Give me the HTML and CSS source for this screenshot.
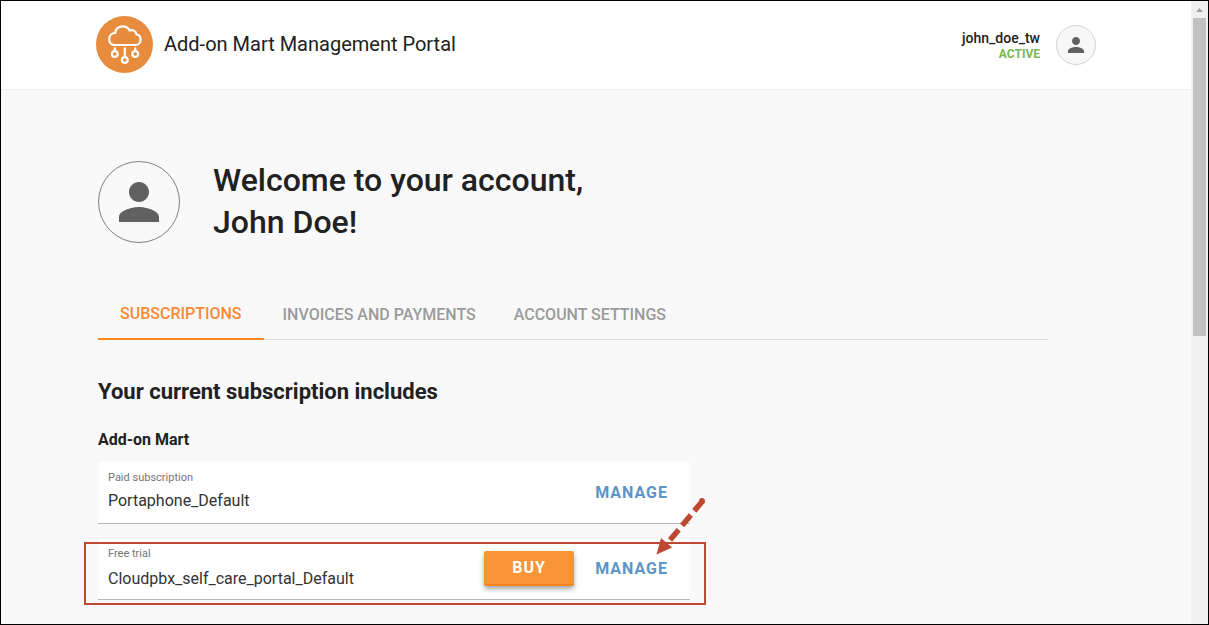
FILE: index.html
```html
<!DOCTYPE html>
<html lang="en">
<head>
<meta charset="utf-8">
<title>Add-on Mart Management Portal</title>
<link rel="stylesheet" href="styles.css">
</head>
<body>
<div class="window">
  <div class="page">
    <header class="header">
      <svg class="logo" viewBox="0 0 57 57" aria-hidden="true">
        <circle cx="28.5" cy="28.5" r="28.5" fill="#e78b3c"/>
        <g fill="none" stroke="#fff" stroke-width="2.2" stroke-linecap="round" stroke-linejoin="round">
          <path d="M18.5 29 C15.300 29 13.200 26.200 13.200 23 C13.200 19.500 15.500 17 19.300 17 C19.300 13 22.500 10.300 26.500 10.300 C30 10.300 32.500 12 33.700 14.600 C37 13.300 40.200 15.300 40.500 18.500 C43.500 18.700 44.600 21.200 44.600 23.700 C44.600 26.800 42.500 29 39.500 29 Z"/>
          <path d="M18.800 32.300v2.500M28.800 32.300v8M39.200 32.300v2.500"/>
          <circle cx="18.800" cy="38" r="2.900"/>
          <circle cx="28.800" cy="44" r="2.900"/>
          <circle cx="39.200" cy="38" r="2.900"/>
        </g>
      </svg>
      <span class="brand">Add-on Mart Management Portal</span>
      <div class="user">
        <span class="user-name">john_doe_tw</span>
        <span class="user-status">ACTIVE</span>
      </div>
      <button class="user-button" type="button" aria-label="Account menu">
        <svg class="person" viewBox="4 4 16 16" aria-hidden="true"><path d="M12 12c2.210 0 4-1.790 4-4s-1.790-4-4-4-4 1.790-4 4 1.790 4 4 4zm0 2c-2.670 0-8 1.340-8 4v2h16v-2c0-2.660-5.330-4-8-4z"/></svg>
      </button>
    </header>
    <main class="content">
      <section class="welcome">
        <div class="avatar">
          <svg class="person" viewBox="4 4 16 16" aria-hidden="true"><path d="M12 12c2.210 0 4-1.790 4-4s-1.790-4-4-4-4 1.790-4 4 1.790 4 4 4zm0 2c-2.670 0-8 1.340-8 4v2h16v-2c0-2.660-5.330-4-8-4z"/></svg>
        </div>
        <h1 class="greeting">Welcome to your account,<br>John Doe!</h1>
      </section>
      <nav class="tabs">
        <a class="tab tab-active" href="#subscriptions">SUBSCRIPTIONS</a>
        <a class="tab" href="#invoices">INVOICES AND PAYMENTS</a>
        <a class="tab" href="#settings">ACCOUNT SETTINGS</a>
      </nav>
      <h2 class="title">Your current subscription includes</h2>
      <h3 class="subtitle">Add-on Mart</h3>
      <div class="plans">
        <div class="plan">
          <div class="plan-info">
            <span class="plan-type">Paid subscription</span>
            <span class="plan-name">Portaphone_Default</span>
          </div>
          <button class="manage" type="button">MANAGE</button>
        </div>
        <div class="plan plan-trial">
          <div class="plan-info">
            <span class="plan-type">Free trial</span>
            <span class="plan-name">Cloudpbx_self_care_portal_Default</span>
          </div>
          <button class="buy" type="button">BUY</button>
          <button class="manage" type="button">MANAGE</button>
          <div class="highlight"></div>
          <svg class="arrow" viewBox="0 0 50 58" aria-hidden="true">
            <path d="M47 3.500 L12 45.500" fill="none" stroke="#bd4932" stroke-width="5.500" stroke-dasharray="13.500 5.500"/>
            <circle cx="46" cy="4" r="2.900" fill="#bd4932"/>
            <path d="M0.500 57.500 L5 41 L16 50.500 Z" fill="#bd4932"/>
          </svg>
        </div>
      </div>
    </main>
  </div>
  <div class="scrollbar">
    <svg class="scroll-up" viewBox="0 0 17 17" aria-hidden="true"><path d="M5 11 L8.500 7 L12 11 Z" fill="#a3a3a3"/></svg>
    <div class="scroll-thumb"></div>
  </div>
</div>
</body>
</html>
```
FILE: styles.css
```css
* {
  box-sizing: border-box;
}

body {
  margin: 0;
  font-family: Roboto, "Liberation Sans", sans-serif;
  color: #212121;
}

button {
  font-family: inherit;
  border: 0;
  padding: 0;
  background: none;
  cursor: pointer;
}

.window {
  display: flex;
  height: 100vh;
  border: 1px solid #000;
  overflow: hidden;
}

.page {
  flex: 1;
  background: #f9f9f9;
}

.header {
  display: flex;
  align-items: center;
  padding: 15px 95px 16px;
  background: #fff;
  border-bottom: 1px solid #f0f0f0;
}

.logo {
  width: 57px;
  height: 57px;
}

.brand {
  margin-left: 11px;
  padding-bottom: 2px;
  font-size: 20px;
  line-height: 28px;
}

.user {
  display: flex;
  flex-direction: column;
  align-items: flex-end;
  margin-left: auto;
  margin-right: 16px;
  padding-top: 3px;
  line-height: 16px;
  font-weight: 500;
}

.user-name {
  font-size: 14px;
}

.user-status {
  font-size: 12px;
  font-weight: 700;
  color: #78b752;
}

.user-button {
  display: flex;
  align-items: center;
  justify-content: center;
  width: 40px;
  height: 40px;
  border: 1px solid #cfd5d8;
  border-radius: 50%;
  background: #f7f7f7;
}

.person {
  width: 16px;
  height: 16px;
  fill: #616161;
}

.content {
  padding: 69px 97px 0;
}

.welcome {
  display: flex;
  align-items: flex-end;
  gap: 33px;
}

.avatar {
  display: flex;
  align-items: center;
  justify-content: center;
  width: 82px;
  height: 82px;
  border: 1px solid #808080;
  border-radius: 50%;
}

.avatar .person {
  width: 40px;
  height: 40px;
}

.greeting {
  margin: 0;
  font-size: 32px;
  line-height: 42px;
  font-weight: 500;
}

.tabs {
  display: flex;
  max-width: 950px;
  margin-top: 46px;
  border-bottom: 1px solid #dcdcdc;
}

.tab {
  padding: 2px 19px 0;
  font-size: 16px;
  line-height: 48px;
  font-weight: 500;
  color: #9b9b9b;
  text-decoration: none;
}

.tab-active {
  padding: 1px 22px 0;
  margin-bottom: -1px;
  color: #f98937;
  border-bottom: 2px solid #f98820;
}

.title {
  margin: 38px 0 0;
  font-size: 22px;
  line-height: 28px;
  font-weight: 700;
}

.subtitle {
  margin: 24px 0 0;
  font-size: 16px;
  line-height: 20px;
  font-weight: 700;
}

.plans {
  display: flex;
  flex-direction: column;
  gap: 14px;
  max-width: 592px;
  margin-top: 12px;
}

.plan {
  position: relative;
  display: flex;
  align-items: center;
  min-height: 62px;
  padding: 0 22px 0 10px;
  background: #fff;
  border-bottom: 1px solid #b5b5b5;
  border-radius: 4px 4px 0 0;
}

.plan-info {
  display: flex;
  flex-direction: column;
  flex: 1;
  align-self: flex-start;
  gap: 6px;
  padding-top: 9px;
}

.plan-trial .plan-info {
  gap: 8px;
}

.plan-type {
  font-size: 11px;
  line-height: 14px;
  color: #757575;
}

.plan-name {
  font-size: 16px;
  line-height: 20px;
  color: #333;
}

.manage,
.buy {
  font-size: 16px;
  font-weight: 700;
  letter-spacing: 1px;
}

.manage {
  color: #5e94c5;
}

.buy {
  width: 90px;
  height: 35px;
  margin-right: 21px;
  color: #fff;
  background: #f89538;
  border-bottom: 2px solid #f5841f;
  border-radius: 2px;
  box-shadow: 0 3px 5px rgba(0, 0, 0, 0.35);
}

.highlight {
  position: absolute;
  inset: 4px -16px -6px -14px;
  border: 2px solid #bd4932;
}

.arrow {
  position: absolute;
  right: -16px;
  top: -41px;
  width: 50px;
  height: 58px;
}

.scrollbar {
  width: 17px;
  background: #f0f0f0;
}

.scroll-up {
  display: block;
  width: 17px;
  height: 17px;
}

.scroll-thumb {
  height: 51%;
  margin: 0 2px;
  background: #c1c1c1;
}
```
